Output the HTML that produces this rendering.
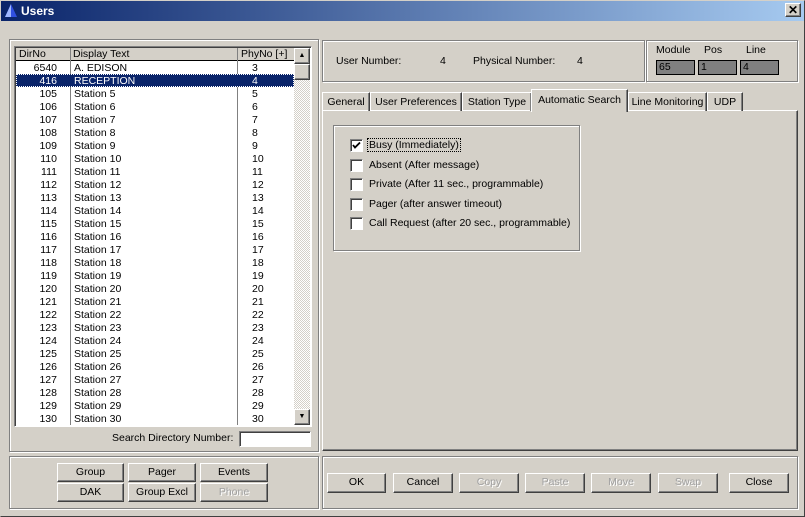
<!DOCTYPE html>
<html><head><style>
*{margin:0;padding:0;box-sizing:border-box}
body{width:805px;height:517px;background:#d4d0c8;font-family:"Liberation Sans",sans-serif;font-size:10.5px;position:relative;overflow:hidden;color:#000}
.a{position:absolute}
.title{left:1px;top:1px;width:803px;height:20px;background:linear-gradient(90deg,#0a246a,#a6caf0)}
.etch{border:1px solid #808080;box-shadow:1px 1px 0 #fff, inset 1px 1px 0 #fff}
.btn{background:#d4d0c8;border:1px solid;border-color:#fff #404040 #404040 #fff;box-shadow:inset -1px -1px 0 #808080;text-align:center;line-height:16px}
.dis{color:#a0a0a0;text-shadow:1px 1px 0 #fff}
.sunk{border:1px solid;border-color:#808080 #fff #fff #808080;box-shadow:inset 1px 1px 0 #404040}
.row{position:absolute;left:0;height:13px;line-height:14px;width:278px}
.row span{position:absolute;top:0}
.cb{position:absolute;width:13px;height:13px;background:#fff;border:1px solid;border-color:#808080 #fff #fff #808080;box-shadow:inset 1px 1px 0 #404040}
.tab{position:absolute;top:92px;height:19px;border:1px solid;border-color:#fff #404040 transparent #fff;border-bottom:none;line-height:18px;text-align:center;box-shadow:inset -1px 0 0 #808080}
</style></head><body>
<div class="a title"></div>
<svg class="a" style="left:5px;top:4px" width="12" height="13"><polygon points="6,0 12,13 0,13" fill="#3050e0"/><polygon points="6,0 6,13 0,13" fill="#a0b8ff"/></svg>
<div class="a" style="left:21px;top:4px;color:#fff;font-weight:bold;font-size:12px">Users</div>
<div class="a btn" style="left:785px;top:3px;width:16px;height:14px;line-height:12px;font-weight:bold;font-size:12px">✕</div>

<div class="a etch" style="left:9px;top:39px;width:310px;height:413px"></div>
<div class="a sunk" style="left:14px;top:46px;width:298px;height:381px;background:#fff"></div>
<div class="a" style="left:16px;top:48px;width:278px;height:13px;background:#d4d0c8;border-bottom:1px solid #000;line-height:13px">
<span class="a" style="left:3px">DirNo</span><span class="a" style="left:57px">Display Text</span><span class="a" style="left:225px">PhyNo [+]</span></div>
<div class="a" style="left:70px;top:48px;width:1px;height:377px;background:#808080"></div>
<div class="a" style="left:237px;top:48px;width:1px;height:377px;background:#808080"></div>
<div class="a" style="left:16px;top:61px" id="rows"></div>
<div class="a" style="left:294px;top:48px;width:16px;height:377px;background:repeating-conic-gradient(#fff 0 25%,#d4d0c8 0 50%) 0 0/2px 2px"></div>
<div class="a btn" style="left:294px;top:48px;width:16px;height:16px;font-size:7px;line-height:13px">▲</div>
<div class="a btn" style="left:294px;top:64px;width:16px;height:16px"></div>
<div class="a btn" style="left:294px;top:409px;width:16px;height:16px;font-size:7px;line-height:13px">▼</div>
<div class="a" style="left:112px;top:432px">Search Directory Number:</div>
<div class="a sunk" style="left:239px;top:431px;width:72px;height:16px;background:#fff"></div>

<div class="a etch" style="left:9px;top:456px;width:310px;height:53px"></div>
<div class="a btn" style="left:57px;top:463px;width:67px;height:19px">Group</div>
<div class="a btn" style="left:128px;top:463px;width:68px;height:19px">Pager</div>
<div class="a btn" style="left:200px;top:463px;width:68px;height:19px">Events</div>
<div class="a btn" style="left:57px;top:483px;width:67px;height:19px">DAK</div>
<div class="a btn" style="left:128px;top:483px;width:68px;height:19px">Group Excl</div>
<div class="a btn dis" style="left:200px;top:483px;width:68px;height:19px">Phone</div>

<div class="a etch" style="left:322px;top:40px;width:323px;height:42px"></div>
<div class="a" style="left:336px;top:55px">User Number:</div>
<div class="a" style="left:440px;top:55px">4</div>
<div class="a" style="left:473px;top:55px">Physical Number:</div>
<div class="a" style="left:577px;top:55px">4</div>
<div class="a etch" style="left:646px;top:40px;width:152px;height:42px"></div>
<div class="a" style="left:656px;top:44px">Module</div>
<div class="a" style="left:704px;top:44px">Pos</div>
<div class="a" style="left:746px;top:44px">Line</div>
<div class="a" style="left:656px;top:60px;width:39px;height:15px;background:#808080;border:1px solid #000;padding-left:2px;line-height:13px">65</div>
<div class="a" style="left:698px;top:60px;width:39px;height:15px;background:#808080;border:1px solid #000;padding-left:2px;line-height:13px">1</div>
<div class="a" style="left:740px;top:60px;width:39px;height:15px;background:#808080;border:1px solid #000;padding-left:2px;line-height:13px">4</div>

<div class="a" style="left:322px;top:110px;width:476px;height:341px;border:1px solid;border-color:#fff #404040 #404040 #fff;box-shadow:inset -1px -1px 0 #808080"></div>
<div class="tab" style="left:322px;width:48px">General</div>
<div class="tab" style="left:370px;width:92px">User Preferences</div>
<div class="tab" style="left:462px;width:70px">Station Type</div>
<div class="tab" style="left:628px;width:79px">Line Monitoring</div>
<div class="tab" style="left:707px;width:36px">UDP</div>
<div class="tab" style="left:531px;top:89px;width:97px;height:23px;background:#d4d0c8;line-height:20px">Automatic Search</div>

<div class="a etch" style="left:333px;top:125px;width:247px;height:126px"></div>
<div class="cb" style="left:350px;top:139px"></div>
<svg class="a" style="left:352px;top:141px" width="9" height="9"><path d="M1 4 L3 6.5 L8 1.5" stroke="#000" stroke-width="1.8" fill="none"/></svg>
<div class="a" style="left:368px;top:139px;outline:1px dotted #000;padding:0 1px">Busy (Immediately)</div>
<div class="cb" style="left:350px;top:159px"></div><div class="a" style="left:369px;top:159px">Absent (After message)</div>
<div class="cb" style="left:350px;top:178px"></div><div class="a" style="left:369px;top:178px">Private (After 11 sec., programmable)</div>
<div class="cb" style="left:350px;top:198px"></div><div class="a" style="left:369px;top:198px">Pager (after answer timeout)</div>
<div class="cb" style="left:350px;top:217px"></div><div class="a" style="left:369px;top:217px">Call Request (after 20 sec., programmable)</div>

<div class="a etch" style="left:322px;top:456px;width:476px;height:53px"></div>
<div class="a btn" style="left:327px;top:473px;width:59px;height:20px">OK</div>
<div class="a btn" style="left:393px;top:473px;width:60px;height:20px">Cancel</div>
<div class="a btn dis" style="left:459px;top:473px;width:60px;height:20px">Copy</div>
<div class="a btn dis" style="left:525px;top:473px;width:60px;height:20px">Paste</div>
<div class="a btn dis" style="left:591px;top:473px;width:60px;height:20px">Move</div>
<div class="a btn dis" style="left:658px;top:473px;width:60px;height:20px">Swap</div>
<div class="a btn" style="left:729px;top:473px;width:60px;height:20px">Close</div>

<div class="a" style="left:0;top:0;width:805px;height:517px;border:1px solid;border-color:#d4d0c8 #404040 #404040 #d4d0c8;pointer-events:none"></div>
<script>
var d=[["6540","A. EDISON","3"],["416","RECEPTION","4"]];
for(var i=105;i<=130;i++)d.push([""+i,"Station "+(i-100),""+(i-100)]);
var h="";
d.forEach(function(r,k){
var sel=k==1;
h+='<div class="row" style="top:'+(k*13)+'px;'+(sel?'background:#0a246a;color:#fff;outline:1px dotted #fff;outline-offset:-1px':'')+'">'+
'<span style="right:'+(278-41)+'px;text-align:right;width:40px;left:auto">'+r[0]+'</span>'+
'<span style="left:58px">'+r[1]+'</span><span style="left:236px">'+r[2]+'</span></div>';
});
document.getElementById("rows").innerHTML=h;
</script>
</body></html>
